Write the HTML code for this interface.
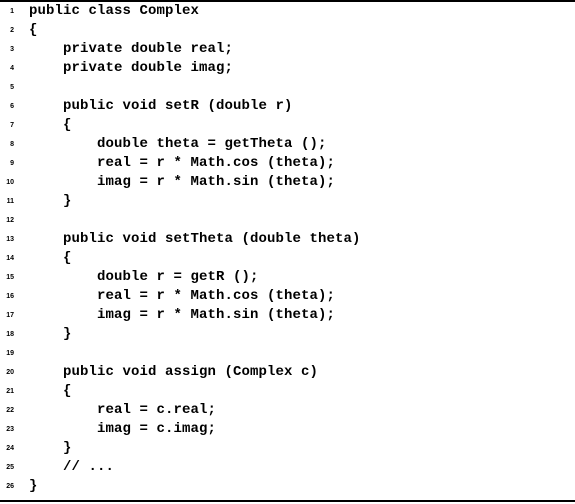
<!DOCTYPE html>
<html><head><style>
html,body{margin:0;padding:0;background:#fff;}
body{width:575px;height:504px;position:relative;overflow:hidden;}
.top{position:absolute;left:0;top:0;width:575px;height:2px;background:#000;}
.bot{position:absolute;left:0;top:500px;width:575px;height:2px;background:#000;}
.l{position:absolute;left:0;height:19px;line-height:19px;white-space:pre;width:575px;}
.n{position:absolute;left:0;top:1px;width:14px;text-align:right;font:bold 7px "Liberation Sans",sans-serif;line-height:19px;}
.c{position:absolute;left:29px;top:1px;font:bold 14px "Liberation Mono",monospace;line-height:19px;color:#000;letter-spacing:0.1px;}
</style></head><body>
<div class="top"></div><div class="bot"></div>
<div class="l" style="top:1px"><span class="n">1</span><span class="c">public class Complex</span></div>
<div class="l" style="top:20px"><span class="n">2</span><span class="c">{</span></div>
<div class="l" style="top:39px"><span class="n">3</span><span class="c">    private double real;</span></div>
<div class="l" style="top:58px"><span class="n">4</span><span class="c">    private double imag;</span></div>
<div class="l" style="top:77px"><span class="n">5</span><span class="c"></span></div>
<div class="l" style="top:96px"><span class="n">6</span><span class="c">    public void setR (double r)</span></div>
<div class="l" style="top:115px"><span class="n">7</span><span class="c">    {</span></div>
<div class="l" style="top:134px"><span class="n">8</span><span class="c">        double theta = getTheta ();</span></div>
<div class="l" style="top:153px"><span class="n">9</span><span class="c">        real = r * Math.cos (theta);</span></div>
<div class="l" style="top:172px"><span class="n">10</span><span class="c">        imag = r * Math.sin (theta);</span></div>
<div class="l" style="top:191px"><span class="n">11</span><span class="c">    }</span></div>
<div class="l" style="top:210px"><span class="n">12</span><span class="c"></span></div>
<div class="l" style="top:229px"><span class="n">13</span><span class="c">    public void setTheta (double theta)</span></div>
<div class="l" style="top:248px"><span class="n">14</span><span class="c">    {</span></div>
<div class="l" style="top:267px"><span class="n">15</span><span class="c">        double r = getR ();</span></div>
<div class="l" style="top:286px"><span class="n">16</span><span class="c">        real = r * Math.cos (theta);</span></div>
<div class="l" style="top:305px"><span class="n">17</span><span class="c">        imag = r * Math.sin (theta);</span></div>
<div class="l" style="top:324px"><span class="n">18</span><span class="c">    }</span></div>
<div class="l" style="top:343px"><span class="n">19</span><span class="c"></span></div>
<div class="l" style="top:362px"><span class="n">20</span><span class="c">    public void assign (Complex c)</span></div>
<div class="l" style="top:381px"><span class="n">21</span><span class="c">    {</span></div>
<div class="l" style="top:400px"><span class="n">22</span><span class="c">        real = c.real;</span></div>
<div class="l" style="top:419px"><span class="n">23</span><span class="c">        imag = c.imag;</span></div>
<div class="l" style="top:438px"><span class="n">24</span><span class="c">    }</span></div>
<div class="l" style="top:457px"><span class="n">25</span><span class="c">    // ...</span></div>
<div class="l" style="top:476px"><span class="n">26</span><span class="c">}</span></div>
</body></html>
